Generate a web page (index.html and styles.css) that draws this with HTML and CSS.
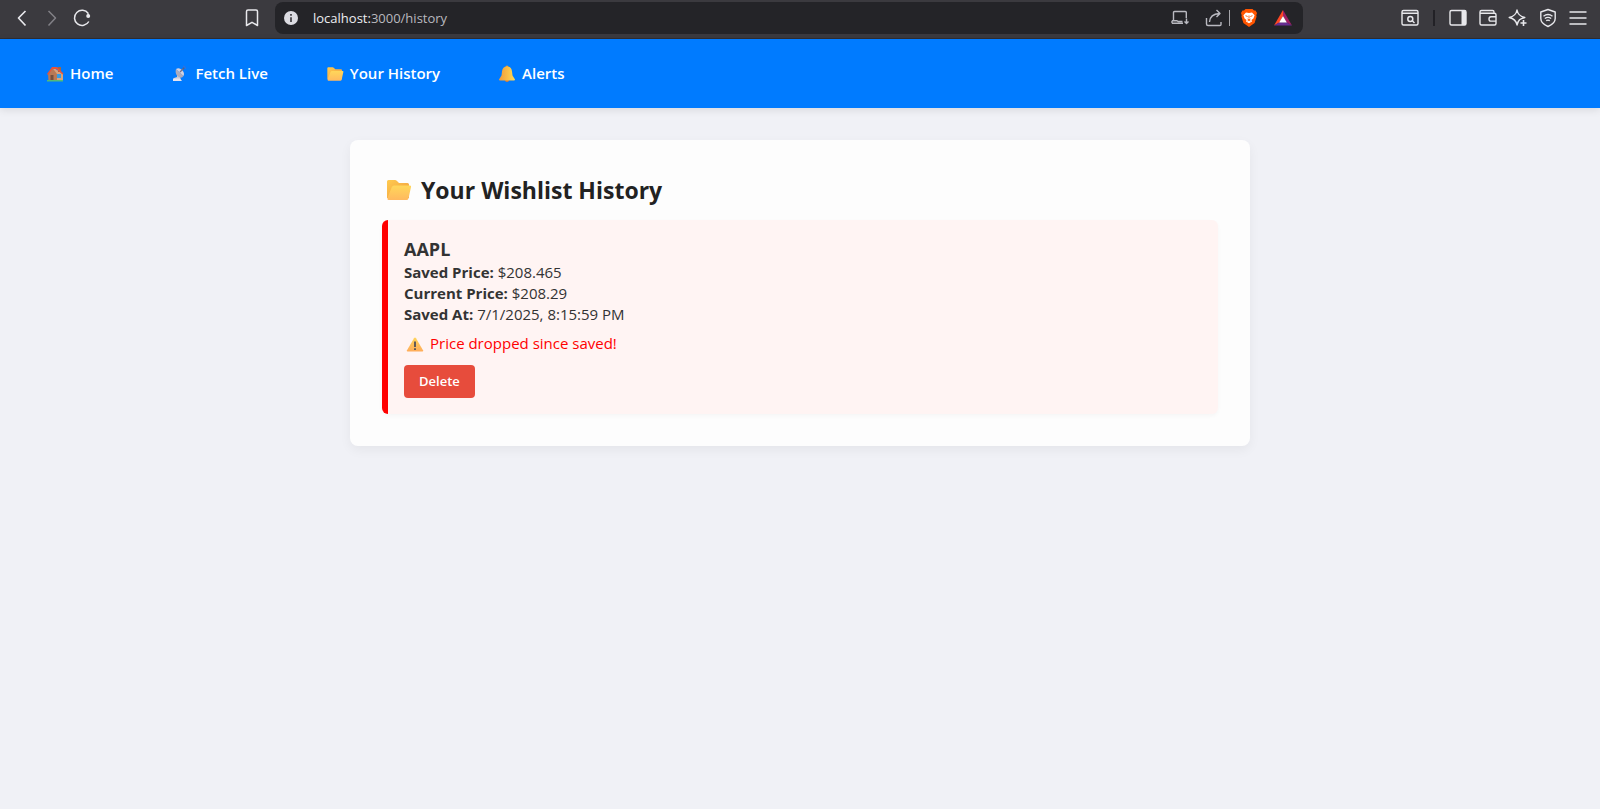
FILE: index.html
```html
<!DOCTYPE html>
<html lang="en">
<head>
<meta charset="utf-8">
<title>Your Wishlist History</title>
<link rel="stylesheet" href="styles.css">
</head>
<body>
<svg class="defs" aria-hidden="true">
  <defs>
    <linearGradient id="folder-back" x1="0" y1="0" x2="1" y2="1"><stop offset="0" stop-color="#ffcb4f"/><stop offset="1" stop-color="#f09a3e"/></linearGradient>
    <linearGradient id="folder-front" x1="0" y1="0" x2="0" y2="1"><stop offset="0" stop-color="#ffd75a"/><stop offset="1" stop-color="#ffb95f"/></linearGradient>
    <linearGradient id="bell-gold" x1="0" y1="0" x2="1" y2="0"><stop offset="0" stop-color="#f09a3a"/><stop offset="1" stop-color="#ffdb55"/></linearGradient>
    <linearGradient id="warn-gold" x1="0" y1="0" x2="0" y2="1"><stop offset="0" stop-color="#ffd45a"/><stop offset="1" stop-color="#ffac5a"/></linearGradient>
    <symbol id="folder" viewBox="0 0 33 24">
      <path d="M5 3.500Q5 2 6.500 2H13Q14 2 15 3L17 5H25.500Q27 5 27 6.500V20H5z" fill="url(#folder-back)"/>
      <path d="M12 7.500H28Q29.500 7.500 29 9L26.500 20.500Q26 22 24.500 22H6.500Q5 22 5.500 20L9.800 9.100Q10.500 7.500 12 7.500z" fill="url(#folder-front)"/>
    </symbol>
  </defs>
</svg>

<header class="browser">
  <div class="browser-left">
    <button class="tool" aria-label="Back"><svg viewBox="0 0 20 20"><path d="M13.500 3 6.500 10l7 7.500" stroke-width="1.700"/></svg></button>
    <button class="tool tool-dim" aria-label="Forward"><svg viewBox="0 0 20 20"><path d="m6.500 3 7 7-7 7.500" stroke-width="1.500"/></svg></button>
    <button class="tool" aria-label="Reload"><svg viewBox="0 0 20 20"><path d="M16.300 5.500A7.600 7.600 0 1 0 16.800 13.500" stroke-width="1.500"/><circle cx="16.200" cy="8" r="2" class="solid"/><path d="M16.300 5.500v3"/></svg></button>
    <button class="tool tool-bookmark" aria-label="Bookmark"><svg viewBox="0 0 20 20"><path d="M4.500 3.500Q4.500 2 6 2h8q1.500 0 1.500 1.500v14L10 14.300 4.500 17.500z" stroke-width="1.500"/></svg></button>
  </div>
  <div class="address">
    <svg class="info" viewBox="0 0 14 14" aria-hidden="true"><circle cx="7" cy="7" r="7" fill="#dcdce2"/><path d="M7 6.300V11M7 3v1.700" stroke="#3c3b40" stroke-width="1.700"/></svg>
    <span class="url">localhost:<span class="url-path">3000/history</span></span>
    <button class="tool tool-soft" aria-label="Install"><svg viewBox="0 0 20 20"><path d="M16.300 10V4.500Q16.300 3.500 15.300 3.500H4.500Q3.500 3.500 3.500 4.500v8.500M2 12.700h5l1 .8h4.500M2 15.300h11M2 12.700v2.600M16.500 10.500v5M14.500 13.500l2 2 2-2"/></svg></button>
    <button class="tool tool-soft" aria-label="Share"><svg viewBox="0 0 20 20"><path d="M2.500 10v6q0 1.500 1.500 1.500h12q1 0 1-1v-2.500M5.500 14q.5-8 10-8.500M12.500 2l3.500 3.500-3.500 3.500" stroke-width="1.400"/></svg></button>
    <span class="address-rule"></span>
    <button class="tool tool-brave" aria-label="Shields"><svg viewBox="0 0 20 20"><path d="M6.500 1h7l1.500 1.500 1.500 0L18 5l-.7 2.200.3 1.300-2 6.500-5.600 4-5.600-4-2-6.500.3-1.300L2 5l1.500-2.500H5z" fill="#ff5500" stroke="none"/><path d="m7 4.500 3 .5 3-.5 2.600 2.800-1.200 3.200-1.900 1.500.5 1.500L10 15.300 7 13.500l.5-1.500-1.900-1.500-1.200-3.200z" fill="#fff" stroke="none"/><path d="m6.500 7.700 2.200.8M13.500 7.700l-2.200.8M10 7.500v3M8.500 11l1.500.7 1.500-.7M8.500 13l1.500-.6 1.500.6" stroke="#ff5500" stroke-width=".9"/></svg></button>
    <button class="tool" aria-label="Rewards"><svg viewBox="0 0 20 20"><path d="M10 2 1 17.500 6.500 14.500 10 8z" fill="#ff4724" stroke="none"/><path d="M10 2 19 17.500 13.500 14.500 10 8z" fill="#9e1f63" stroke="none"/><path d="M1 17.500h18l-5.500-3.300h-7z" fill="#662d91" stroke="none"/><path d="m10 8 3.800 6.500H6.200z" fill="#fff" stroke="none"/></svg></button>
  </div>
  <div class="browser-right">
    <button class="tool" aria-label="Search tabs"><svg viewBox="0 0 20 20"><rect x="2" y="2.500" width="16" height="14.500" rx="1.500"/><path d="M2 5.300h16M12.500 13l2 2"/><circle cx="10.300" cy="11" r="2.500" stroke-width="1.500"/></svg></button>
    <span class="browser-rule"></span>
    <button class="tool" aria-label="Sidebar"><svg viewBox="0 0 20 20"><rect x="2" y="2.500" width="16" height="14.500" rx="1.500"/><path d="M13.500 2.500H17l1 1V16l-1 1h-3.500z" class="solid"/></svg></button>
    <button class="tool" aria-label="Wallet"><svg viewBox="0 0 20 20"><path d="M16 5.200V4Q16 2.500 14.500 2.500H3.500Q2 2.500 2 4V15.500q0 1.500 1.500 1.500h13Q18 17 18 15.500V6.700Q18 5.300 16.500 5.300H3Q2 5.300 2 4.300M18 8.700h-5q-2 0-2 2.200t2 2.200h5"/></svg></button>
    <button class="tool" aria-label="Assistant"><svg viewBox="0 0 20 20"><path d="M9 2Q10 8 16.800 9.500 13 10.500 11.500 11.800 10 13.500 9 17 8 11 1.200 9.500 8 8 9 2z"/><path d="M15.500 12v6M12.500 15h6" stroke-width="1.600"/></svg></button>
    <button class="tool" aria-label="VPN"><svg viewBox="0 0 20 20"><path d="m10 1.500 7.200 2.500v6.500q0 5-7.200 8-7.200-3-7.200-8V4z"/><path d="M5.500 8.200q4.500-3.300 9 0M6.800 10.500q3.200-2.300 6.400 0M8.200 12.700q1.800-1.200 3.600 0" stroke-width="1.400"/></svg></button>
    <button class="tool" aria-label="Menu"><svg viewBox="0 0 20 20"><path d="M1.500 4h17M1.500 10h17M1.500 16h17" stroke-width="1.600"/></svg></button>
  </div>
</header>

<nav class="nav">
  <a class="nav-link" href="#home"><svg class="emoji" viewBox="0 0 22 20" aria-hidden="true"><path d="M5 9 10 4l9 6v7H5z" fill="#d8a27c"/><path d="M4 9.500 8.500 4 13 10v7H4.500z" fill="#b87956"/><path d="M14 3h3v5h-3z" fill="#a5673f"/><path d="M3 10 8 3h5l6.500 6.500-1 1-6-5.500-.5 0L8.500 5 4 11z" fill="#e8533a"/><path d="M6.500 11h3v6h-3z" fill="#75503f"/><path d="M13 10h4v4h-4z" fill="#359ce5"/><path d="M3 16h16v1.500H3z" fill="#54bb77"/></svg>Home</a>
  <a class="nav-link" href="#fetch"><svg class="emoji" viewBox="0 0 22 20" aria-hidden="true"><path d="m8 9 3 3 1 5H4l1-3 3-1z" fill="#c9c9d6"/><path d="M7 5q-1.500 5 2 7.500t5.500-.5z" fill="#aeabba"/><path d="m7 5 7.500 7Q16 9 13 6T7 5z" fill="#d3d1de"/><path d="m11 8 3.500-3.500" stroke="#74718b" stroke-width="1.200"/><circle cx="14.500" cy="4.500" r="1" fill="#596080"/><path d="M14 2q2.500 0 2.500 3" fill="none" stroke="#3c6fd6"/><path d="M4 14.500h7l2 2.500H4z" fill="#e7e4ed"/></svg>Fetch Live</a>
  <a class="nav-link" href="#history"><svg class="emoji" aria-hidden="true"><use href="#folder"/></svg>Your History</a>
  <a class="nav-link" href="#alerts"><svg class="emoji" viewBox="0 0 22 20" aria-hidden="true"><circle cx="11" cy="3" r="1.500" fill="#e39938"/><circle cx="11" cy="16" r="2" fill="#db7b34"/><path d="M11 2.500q4.500 0 5 5l.5 4 2.500 4Q19 16.500 18 16.500H4q-1 0-1-1l2.500-4 .5-4q.5-5 5-5z" fill="url(#bell-gold)"/></svg>Alerts</a>
</nav>

<main class="card">
  <h2 class="title"><svg class="title-icon" aria-hidden="true"><use href="#folder"/></svg>Your Wishlist History</h2>
  <article class="stock">
    <h3 class="symbol">AAPL</h3>
    <p class="line"><strong>Saved Price:</strong> $208.465</p>
    <p class="line"><strong>Current Price:</strong> $208.29</p>
    <p class="line"><strong>Saved At:</strong> 7/1/2025, 8:15:59 PM</p>
    <p class="line warning"><svg class="emoji" viewBox="0 0 22 20" aria-hidden="true"><path d="M10 4.300q1-1.600 2 0l7 12q.5 1.200-.7 1.200H3.700q-1.200 0-.7-1.200z" fill="url(#warn-gold)"/><path d="M11 7.500v5.500M11 14.300v1.700" stroke="#50505a" stroke-width="1.800"/></svg>Price dropped since saved!</p>
    <button class="delete">Delete</button>
  </article>
</main>
</body>
</html>
```
FILE: styles.css
```css
* {
  box-sizing: border-box;
}

body {
  margin: 0;
  background: #f0f1f6;
  color: #333;
  font: 15px/21px "Segoe UI", "Open Sans", "Noto Sans", sans-serif;
}

h2, h3, p {
  margin: 0;
}

.defs {
  position: absolute;
  width: 0;
  height: 0;
}

/* Browser toolbar */
.browser {
  display: flex;
  align-items: center;
  height: 39px;
  padding: 0 7px 2px;
  background: #3b3a3f;
  border-bottom: 1px solid #2f2e33;
}

.browser-left {
  display: flex;
  flex: 0 0 268px;
  padding-right: 8px;
}

.tool-bookmark {
  margin-left: auto;
}

.browser-right {
  display: flex;
  flex: 0 0 290px;
  align-items: center;
  justify-content: flex-end;
}

.tool {
  display: flex;
  align-items: center;
  justify-content: center;
  width: 30px;
  height: 30px;
  padding: 0;
  border: 0;
  background: none;
  color: #e8e8ec;
}

.tool svg {
  width: 20px;
  height: 20px;
  fill: none;
  stroke: currentColor;
  stroke-width: 1.4;
  stroke-linejoin: round;
}

.tool .solid {
  fill: currentColor;
  stroke: none;
}

.tool-dim {
  color: #828187;
}

.tool-soft {
  color: #b9b9c0;
  margin-left: 4px;
}

.tool-brave {
  margin-right: 4px;
}

.browser-rule {
  width: 2px;
  height: 16px;
  margin: 0 8px;
  background: #222126;
}

.address {
  display: flex;
  flex: 1;
  align-items: center;
  height: 32px;
  padding: 0 5px 0 9px;
  border-radius: 8px;
  background: #242428;
}

.info {
  width: 14px;
  height: 14px;
}

.url {
  flex: 1;
  margin-left: 15px;
  color: #ededf0;
  font-size: 13px;
}

.url-path {
  color: #b9b9bf;
}

.address-rule {
  width: 1px;
  height: 16px;
  margin-right: 4px;
  background: #a5a5aa;
}

/* Site navigation */
.nav {
  display: flex;
  gap: 32px;
  padding: 16px 32px;
  background: #007bff;
  box-shadow: 0 2px 8px rgba(0, 0, 0, 0.1);
}

.nav-link {
  display: flex;
  align-items: center;
  padding: 8px 12px;
  color: #fff;
  font-weight: 600;
  text-decoration: none;
}

.emoji {
  flex: none;
  width: 22px;
  height: 20px;
  margin-right: 4px;
}

/* Wishlist */
.card {
  max-width: 900px;
  margin: 32px auto;
  padding: 32px;
  border-radius: 8px;
  background: #fdfdfd;
  box-shadow: 0 4px 12px rgba(0, 0, 0, 0.05);
}

.title {
  display: flex;
  align-items: center;
  margin-bottom: 12px;
  color: #222;
  font-size: 23px;
  line-height: 36px;
}

.title-icon {
  width: 33px;
  height: 24px;
  margin-right: 6px;
}

.stock {
  padding: 16px;
  border-left: 6px solid #f00;
  border-radius: 6px;
  background: #fff4f3;
  box-shadow: 0 2px 4px rgba(0, 0, 0, 0.03);
}

.symbol {
  font-size: 18px;
  line-height: 26px;
}

.warning {
  display: flex;
  align-items: center;
  margin: 8px 0 11px;
  color: #f00;
}

.delete {
  display: block;
  height: 33px;
  padding: 0 15px;
  border: 0;
  border-radius: 4px;
  background: #e74c3c;
  color: #fff;
  font: inherit;
  font-size: 13px;
  font-weight: 600;
}
```
